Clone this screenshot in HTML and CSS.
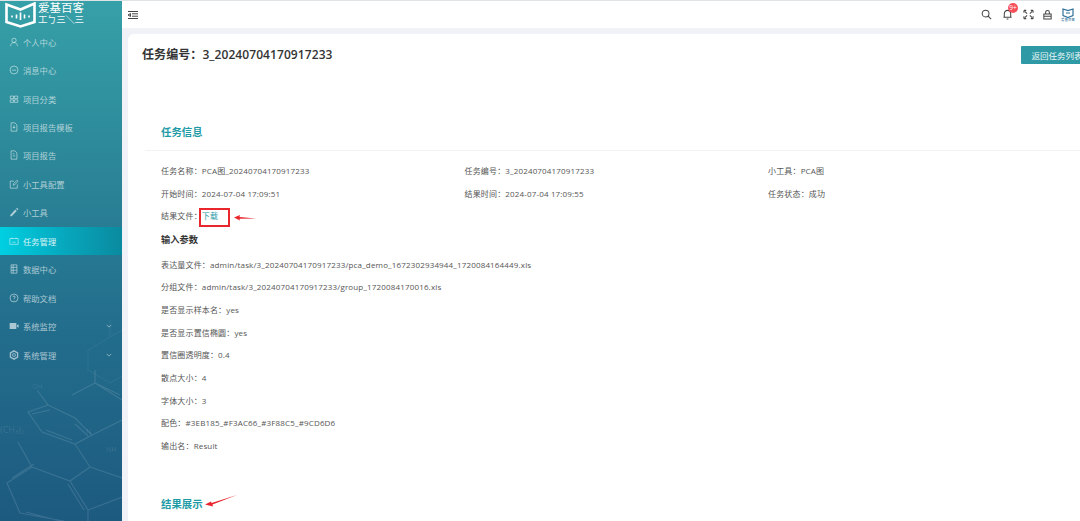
FILE: index.html
```html
<!DOCTYPE html>
<html lang="zh-CN">
<head>
<meta charset="utf-8">
<title>任务详情</title>
<link rel="stylesheet" href="styles.css">
</head>
<body>
<div class="shell">
  <aside class="sidebar">
    <svg class="molecule" viewBox="0 0 122 521" width="122" height="521" fill="none" stroke="#fff" stroke-opacity=".12" stroke-width="1.2">
      <path d="M37 390 48 405 28 412 42 432 75 444 92 435 75 418 48 405M32 414 50 410M46 430 72 440M75 424 88 436M75 444 90 467 70 481 32 467 18 442M32 467 7 483 20 513 64 521M12 478 34 464M70 481 88 510 122 497M68 484 84 510M90 467 122 478M26 512 60 521M88 510 88 521M72 395 95 383 120 395M95 383 95 370M95 383 122 400M92 435 122 420"/>
      <path stroke-opacity=".05" d="M122 330 110 337 88 350 88 370 110 383 122 376M110 337 110 320"/>
      <text x="32" y="389" class="mol-text">OH</text>
      <text x="0" y="433" class="mol-text big">(CH₃)₂</text>
      <text x="86" y="434" class="mol-text">N</text>
      <text x="106" y="452" class="mol-text">NH</text>
    </svg>
    <div class="logo">
      <svg class="logo-mark" viewBox="0 0 31 26" width="31" height="26" fill="none" stroke="#fff" stroke-width="2.6">
        <path d="M1.500 2.500 15.500 7.500 29.500 1.500V20L15.500 24.500 1.500 20Z"/>
        <path d="M7 13.500V15.500M11.500 12.500V16.500M15.500 10.500V18M19.500 12.500V16.500M24 13.500V15.500" stroke-width="1.600"/>
      </svg>
      <div class="logo-text">
        <div class="logo-top">爱基百客</div>
        <div class="logo-bottom">工ㄅ三＼三</div>
      </div>
    </div>
    <nav class="menu">
      <a class="item"><svg class="ico" viewBox="0 0 12 12"><circle cx="6" cy="4" r="2.600"/><path d="M1.800 11c.3-3 2-4.300 4.200-4.300S9.900 8 10.200 11"/></svg><span>个人中心</span></a>
      <a class="item"><svg class="ico" viewBox="0 0 12 12"><circle cx="6" cy="6" r="4.800"/><path d="M3.500 6.200h5"/></svg><span>消息中心</span></a>
      <a class="item"><svg class="ico" viewBox="0 0 12 12"><path d="M1.500 2.500h4v3h-4zM6.500 2.500h4v3h-4zM1.500 7h4v3h-4zM6.500 7h4v3h-4z"/></svg><span>项目分类</span></a>
      <a class="item"><svg class="ico" viewBox="0 0 12 12"><path d="M2.500 1h4.500l2.500 2.500V11h-7zM6 4v4M4.500 6.500H7.500"/></svg><span>项目报告模板</span></a>
      <a class="item"><svg class="ico" viewBox="0 0 12 12"><path d="M2.500 1h4.500l2.500 2.500V11h-7zM4.500 7h3M4.500 4.500h2"/></svg><span>项目报告</span></a>
      <a class="item"><svg class="ico" viewBox="0 0 12 12"><path d="M10 6.500V11H1.500V2.500H6M5 7.500l.4-1.800L9.500 1.500l1.300 1.300-4 4.200z"/></svg><span>小工具配置</span></a>
      <a class="item"><svg class="ico" viewBox="0 0 12 12"><path class="solid" d="M1.500 9.500 7.500 3l1.800 1.800-6 6.200H1.500zM8.500 2l1.800 1.800 1-1-1.800-1.800z"/></svg><span>小工具</span></a>
      <a class="item active"><svg class="ico" viewBox="0 0 12 12"><path d="M1 3h10v7H1zM3.500 2v1.500M8.500 2v1.500M4 7.500h4"/></svg><span>任务管理</span></a>
      <a class="item"><svg class="ico" viewBox="0 0 12 12"><path d="M2.500 1h7v10h-7zM2.500 4h7M2.500 7.500h7M5 1v10"/></svg><span>数据中心</span></a>
      <a class="item"><svg class="ico" viewBox="0 0 12 12"><circle cx="6" cy="6" r="4.800"/><path d="M4.600 4.800C4.700 3.200 7.500 3.200 7.500 4.800 7.500 5.900 6 5.900 6 7.200M6 8.200v.8"/></svg><span>帮助文档</span></a>
      <a class="item"><svg class="ico" viewBox="0 0 12 12"><path class="solid" d="M.8 2.500h8v7h-8zM9.500 5l2-1v4l-2-1z"/></svg><span>系统监控</span><svg class="chev" viewBox="0 0 8 8"><path d="M1 2.500 4 5.500 7 2.500"/></svg></a>
      <a class="item"><svg class="ico" viewBox="0 0 12 12"><circle cx="6" cy="6" r="1.800"/><path d="M6 1 10.300 3.500V8.500L6 11 1.700 8.500V3.500Z" stroke-width="1.600"/></svg><span>系统管理</span><svg class="chev" viewBox="0 0 8 8"><path d="M1 2.500 4 5.500 7 2.500"/></svg></a>
    </nav>
  </aside>

  <div class="main">
    <header class="topbar">
      <svg class="fold" viewBox="0 0 10 8" width="10" height="8"><path d="M0 .5h10M4 2.800h6M4 5.200h6M0 7.500h10M0 4l2.500-1.500v3z"/></svg>
      <div class="tools">
        <svg class="tool" viewBox="0 0 12 12"><circle cx="5" cy="5" r="3.700"/><path d="M7.800 7.800 11 11"/></svg>
        <div class="bell">
          <svg class="tool" viewBox="0 0 12 12"><path d="M2.500 9V5.500C2.500 3.200 4 1.500 6 1.500S9.500 3.200 9.500 5.500V9ZM1.500 9h9M5 10.800h2"/></svg>
          <span class="badge">9+</span>
        </div>
        <svg class="tool" viewBox="0 0 12 12"><path d="M1 4V1.500M1 1.500H3.500M8.500 1.500H11M11 1.500V4M11 8V10.500M11 10.500H8.500M3.500 10.500H1M1 10.500V8M2 2.500 4.500 5M10 2.500 7.500 5M10 9.500 7.500 7M2 9.500 4.500 7"/></svg>
        <svg class="tool lock" viewBox="0 0 12 12"><path d="M2 5.500h8V11H2zM4 5.500V3.500C4 1 8 1 8 3.500V5.500M2 8h8"/></svg>
        <div class="avatar">
          <svg viewBox="0 0 12 10" width="12" height="10" fill="none" stroke="#2f6f9a" stroke-width="1.200"><path d="M1 1 6 2.500 11 1V7.500L6 9.500 1 7.500ZM4 5h4"/></svg>
          <span class="avatar-text">爱基百客</span>
        </div>
      </div>
    </header>

    <div class="content">
      <section class="card">
        <div class="card-head">
          <h1 class="task-title">任务编号：3_20240704170917233</h1>
          <button class="back">返回任务列表</button>
        </div>

        <h2 class="section-title first">任务信息</h2>
        <div class="rule"></div>

        <div class="info">
          <div>任务名称：PCA图_20240704170917233</div>
          <div>任务编号：3_20240704170917233</div>
          <div>小工具：PCA图</div>
          <div>开始时间：2024-07-04 17:09:51</div>
          <div>结果时间：2024-07-04 17:09:55</div>
          <div>任务状态：成功</div>
          <div>结果文件：<a class="link">下载</a></div>
        </div>

        <h3 class="sub-title">输入参数</h3>
        <div class="params">
          <p>表达量文件：admin/task/3_20240704170917233/pca_demo_1672302934944_1720084164449.xls</p>
          <p>分组文件：admin/task/3_20240704170917233/group_1720084170016.xls</p>
          <p>是否显示样本名：yes</p>
          <p>是否显示置信椭圆：yes</p>
          <p>置信圈透明度：0.4</p>
          <p>散点大小：4</p>
          <p>字体大小：3</p>
          <p>配色：#3EB185_#F3AC66_#3F88C5_#9CD6D6</p>
          <p>输出名：Result</p>
        </div>

        <h2 class="section-title result">结果展示</h2>
      </section>
    </div>
  </div>

  <div class="mark-box"></div>
  <svg class="arrow arrow-a" viewBox="0 0 22 6" width="22" height="6"><path d="M0 2.500 6 0 5.500 2 22 3.500 5.500 3.800 6 5.500Z"/></svg>
  <svg class="arrow arrow-b" viewBox="0 0 32 12" width="32" height="12"><path d="M0 9.500 6 6.500 6.500 8 32 0 7.500 9.500 8 11.500Z"/></svg>
</div>
</body>
</html>
```

FILE: styles.css
```css
* { box-sizing: border-box; }
html, body { margin: 0; height: 100%; overflow: hidden; }
body {
  font-family: "Open Sans", "Noto Sans CJK SC", sans-serif;
  color: #555;
  background: #f0f2f7;
}
.shell {
  position: relative;
  display: flex;
  width: 1080px;
  height: 521px;
  overflow: hidden;
  border-top: 1px solid #dfe3e6;
}

/* sidebar */
.sidebar {
  position: relative;
  flex: 0 0 122px;
  height: 520px;
  overflow: hidden;
  background: linear-gradient(180deg, #36a0a8 0%, #2c8899 30%, #236f8d 60%, #1d5a80 100%);
}
.molecule { position: absolute; left: 0; top: -1px; }
.mol-text { fill: #fff; fill-opacity: .12; stroke: none; font-size: 7px; }
.mol-text.big { font-size: 9px; }
.logo {
  position: relative;
  display: flex;
  align-items: flex-start;
  gap: 2px;
  height: 26.500px;
  padding: 1px 0 0 5px;
}
.logo-text { color: #fff; line-height: 1; }
.logo-top { font-size: 11.500px; height: 13px; }
.logo-bottom { font-size: 9.500px; letter-spacing: -.4px; white-space: nowrap; opacity: .95; }
.menu { position: relative; display: flex; flex-direction: column; }
.item {
  display: flex;
  align-items: center;
  height: 28.450px;
  padding: 0 9px;
  font-size: 8.300px;
  color: rgba(255, 255, 255, .62);
}
.item span { flex: 1; margin-left: 4px; white-space: nowrap; }
.item.active {
  color: rgba(255, 255, 255, .88);
  background: linear-gradient(90deg, #00d0e2 0%, #07a6bc 55%, #0a8a9f 100%);
}
.ico {
  flex: 0 0 10px;
  width: 10px;
  height: 10px;
  fill: none;
  stroke: rgba(255, 255, 255, .58);
  stroke-width: 1;
}
.ico .solid { fill: rgba(255, 255, 255, .62); stroke: none; }
.chev {
  flex: 0 0 6px;
  width: 6px;
  height: 6px;
  margin-right: 1px;
  fill: none;
  stroke: rgba(255, 255, 255, .6);
  stroke-width: 1;
}

/* main column */
.main { flex: 1; min-width: 0; display: flex; flex-direction: column; }
.topbar {
  flex: 0 0 27px;
  display: flex;
  align-items: center;
  justify-content: space-between;
  padding: 0 5px 0 6px;
  background: #fff;
}
.fold { fill: none; stroke: #444; stroke-width: 1; }
.tools { display: flex; align-items: center; gap: 10px; }
.tool {
  display: block;
  width: 11px;
  height: 11px;
  fill: none;
  stroke: #444;
  stroke-width: 1.100;
}
.tool.lock { margin: 0 -2px; }
.bell { position: relative; }
.badge {
  position: absolute;
  left: 6px;
  top: -6px;
  width: 10px;
  height: 10px;
  border-radius: 50%;
  background: #f5505a;
  color: #fff;
  font-size: 6.500px;
  line-height: 10px;
  text-align: center;
}
.avatar {
  display: flex;
  flex-direction: column;
  align-items: center;
  width: 14px;
  line-height: 1;
}
.avatar-text { font-size: 3.500px; color: #2f6f9a; white-space: nowrap; }

.content { flex: 1; padding: 6px 0 0 6px; min-width: 0; }
.card {
  width: 1000px;
  height: 600px;
  background: #fff;
  border-radius: 6px;
}
.card-head {
  display: flex;
  justify-content: space-between;
  align-items: flex-start;
  padding: 12px 33px 0 14px;
  height: 57px;
}
.task-title {
  margin: 0;
  font-size: 12px;
  letter-spacing: .08px;
  line-height: 18px;
  font-weight: 600;
  color: #333;
}
.back {
  width: 74px;
  height: 18px;
  padding: 0 2px 0 0;
  border: 0;
  border-radius: 1px;
  background: #2f9aa6;
  color: #e8f6f7;
  font: inherit;
  font-size: 8.500px;
  white-space: nowrap;
}
.section-title {
  margin: 0;
  padding-left: 33px;
  font-size: 10.400px;
  line-height: 16px;
  font-weight: 600;
  color: #1f9ba6;
}
.section-title.first { margin-top: 33px; }
.rule { height: 1px; margin: 10px 0 0 17px; background: #f1f2f4; }
.info {
  display: grid;
  grid-template-columns: 303.500px 303.500px 1fr;
  grid-auto-rows: 22.600px;
  padding: 9px 0 0 33px;
  font-size: 8px;
  letter-spacing: .16px;
  line-height: 22.600px;
}
.link { color: #1f9ba6; }
.sub-title {
  margin: 0;
  padding: 5px 0 0 33px;
  font-size: 9.250px;
  line-height: 14px;
  font-weight: 600;
  color: #333;
}
.params { padding: 7px 0 0 33px; }
.params p {
  margin: 0;
  font-size: 8px;
  letter-spacing: .16px;
  line-height: 22.650px;
  white-space: nowrap;
}
.section-title.result { margin-top: 38px; font-weight: 700; }

/* annotations over the content */
.mark-box {
  position: absolute;
  left: 199px;
  top: 207px;
  width: 31px;
  height: 19px;
  border: 2px solid #e8262c;
}
.arrow { position: absolute; fill: #e8262c; }
.arrow-a { left: 234px; top: 214px; }
.arrow-b { left: 205px; top: 494px; }
```
